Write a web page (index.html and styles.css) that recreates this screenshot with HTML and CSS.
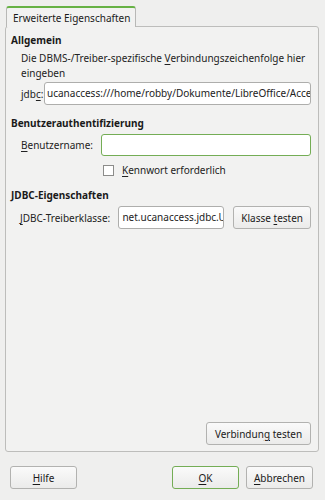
FILE: index.html
```
<!DOCTYPE html>
<html lang="de">
<head>
    <meta charset="UTF-8">
    <title>Erweiterte Eigenschaften</title>
    <link rel="stylesheet" href="styles.css">
</head>
<body>

<div class="dialog">
    <div class="tabs">
        <div class="tab">Erweiterte Eigenschaften</div>
    </div>
    <div class="panel">
        <h3>Allgemein</h3>
        <p class="hint">Die DBMS-/Treiber-spezifische <u>V</u>erbindungszeichenfolge hier eingeben</p>
        <div class="row url-row">
            <label>jdb<u>c</u>:</label>
            <div class="field">ucanaccess:///home/robby/Dokumente/LibreOffice/Access</div>
        </div>

        <h3 class="sec">Benutzerauthentifizierung</h3>
        <div class="row user-row">
            <label><u>B</u>enutzername:</label>
            <div class="field focus"></div>
        </div>
        <div class="check-row">
            <span class="box"></span>
            <span><u>K</u>ennwort erforderlich</span>
        </div>

        <h3 class="sec jdbc">JDBC-Eigenschaften</h3>
        <div class="row driver-row">
            <label><u>J</u>DBC-Treiberklasse:</label>
            <div class="field driver">net.ucanaccess.jdbc.UcanaccessDriver</div>
            <button class="btn test">Klasse <u>t</u>esten</button>
        </div>

        <div class="panel-foot">
            <button class="btn conn">Verbindun<u>g</u> testen</button>
        </div>
    </div>

    <div class="buttons">
        <button class="btn help"><u>H</u>ilfe</button>
        <span class="spacer"></span>
        <button class="btn ok"><u>O</u>K</button>
        <button class="btn cancel"><u>A</u>bbrechen</button>
    </div>
</div>

</body>
</html>
```

FILE: styles.css
```
body {
    margin: 0;
    background-color: #efefee;
    font-family: "Noto Sans", "Open Sans", sans-serif;
    font-size: 10px;
    color: #222;
}
u {
    text-decoration-thickness: 1px;
    text-underline-offset: 2px;
}
.dialog {
    width: 325px;
    height: 500px;
    display: flex;
    flex-direction: column;
    box-sizing: border-box;
    padding: 6px 6px 0 5px;
}
.tabs {
    display: flex;
    height: 21px;
    padding-left: 1px;
}
.tab {
    width: 130px;
    height: 21px;
    box-sizing: border-box;
    padding: 3px 0 0 6px;
    border: 1px solid #b8b8b6;
    border-top: 2px solid #67b245;
    border-bottom: none;
    border-radius: 3px 3px 0 0;
    background-color: #f2f2f1;
    color: #1a1a1a;
    line-height: 14px;
    white-space: nowrap;
    position: relative;
    z-index: 1;
}
.panel {
    height: 426px;
    box-sizing: border-box;
    border: 1px solid #bdbdbb;
    border-radius: 3px;
    margin-top: -1px;
    background-color: #f2f2f1;
    padding: 5px 7px 6px 5px;
    display: flex;
    flex-direction: column;
}
h3 {
    margin: 0;
    font-size: 10px;
    font-weight: bold;
    line-height: 16px;
    color: #1a1a1a;
}
h3.sec {
    margin-top: 10px;
}
h3.jdbc {
    margin-top: 10px;
}
.hint {
    margin: 3px 0 0 10px;
    line-height: 15px;
}
.row {
    display: flex;
    align-items: center;
}
.row label {
    white-space: nowrap;
}
.field {
    height: 23px;
    box-sizing: border-box;
    border: 1px solid #aeaeac;
    border-radius: 3px;
    background-color: #fff;
    padding: 0 3px;
    line-height: 21px;
    white-space: nowrap;
    overflow: hidden;
    flex: 1;
}
.field.focus {
    border-color: #74ad55;
    height: 22px;
}
.url-row {
    margin: 1px 0 0 10px;
}
.url-row label {
    width: 23px;
}
.url-row .field {
    padding-left: 2px;
}
.user-row {
    margin: 3px 0 0 10px;
}
.user-row label {
    width: 80px;
}
.check-row {
    display: flex;
    align-items: center;
    margin: 7px 0 0 92px;
    line-height: 14px;
}
.box {
    width: 9px;
    height: 9px;
    border: 1px solid #8c8c8a;
    background-color: #fff;
    margin-right: 8px;
}
.driver-row {
    margin: 3px 0 0 9px;
}
.driver-row label {
    width: 99px;
}
.field.driver {
    flex: none;
    width: 106px;
}
.btn {
    font-family: inherit;
    font-size: 10px;
    color: #1a1a1a;
    height: 23px;
    box-sizing: border-box;
    border: 1px solid #b2b2b0;
    border-radius: 3px;
    background: linear-gradient(#fafafa, #ebebea);
    padding: 0 4px;
    white-space: nowrap;
}
.btn.test {
    width: 78px;
    margin-left: 9px;
}
.panel-foot {
    margin-top: auto;
    display: flex;
    justify-content: flex-end;
}
.btn.conn {
    width: 105px;
}
.buttons {
    display: flex;
    margin-top: 14px;
    padding: 0 6px 0 5px;
}
.spacer {
    flex: 1;
}
.btn.help,
.btn.ok,
.btn.cancel {
    width: 67px;
}
.btn.ok {
    border-color: #74ad55;
    margin-right: 7px;
}
```
